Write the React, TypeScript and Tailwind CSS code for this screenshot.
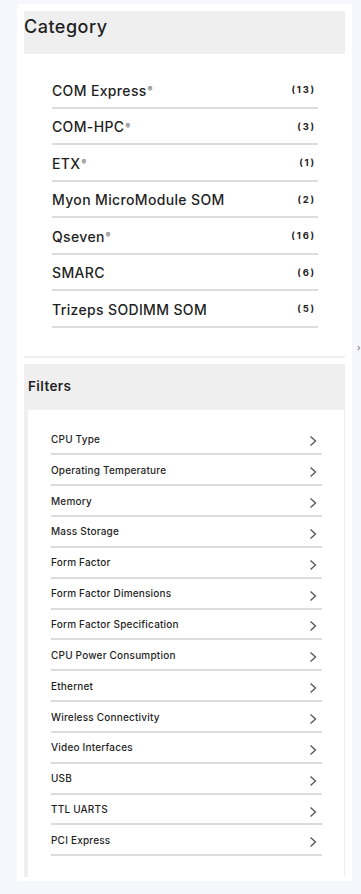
import React from "react";

const cats: [string, boolean, string][] = [
  ["COM Express", true, "13"],
  ["COM-HPC", true, "3"],
  ["ETX", true, "1"],
  ["Myon MicroModule SOM", false, "2"],
  ["Qseven", true, "16"],
  ["SMARC", false, "6"],
  ["Trizeps SODIMM SOM", false, "5"],
];

const filters = [
  "CPU Type",
  "Operating Temperature",
  "Memory",
  "Mass Storage",
  "Form Factor",
  "Form Factor Dimensions",
  "Form Factor Specification",
  "CPU Power Consumption",
  "Ethernet",
  "Wireless Connectivity",
  "Video Interfaces",
  "USB",
  "TTL UARTS",
  "PCI Express",
];

function Chevron() {
  return (
    <svg width="8" height="12" viewBox="0 0 8 12" className="mt-[4px]">
      <path d="M1.5 1.5 L6.5 6 L1.5 10.5" fill="none" stroke="#555" strokeWidth="1.3" />
    </svg>
  );
}

export default function App() {
  return (
    <div
      className="relative min-h-[894px] bg-[#f5f7fc] pt-[4px] pl-[17px] text-[#1f1f1f]"
      style={{ fontFamily: "Inter, 'Noto Sans', sans-serif" }}
    >
      <div className="w-[335px] bg-white px-[7px] pt-[7px] pb-[4px]">
        <div className="h-[43px] bg-[#efefef] flex items-start pt-[2px]">
          <span className="text-[18px] font-medium leading-[28px] tracking-[0.5px]">Category</span>
        </div>
        <div className="pl-[28px] pr-[27px] pt-[18px]">
          {cats.map(([name, reg, n]) => (
            <div
              key={name}
              className="h-[36.5px] pt-[2px] border-b-2 border-[#dcdcdc] flex items-center justify-between"
            >
              <span className="text-[14px] font-medium tracking-[0.35px]">
                {name}
                {reg && <sup className="text-[7px] ml-[1px] text-[#555]">®</sup>}
              </span>
              <span className="text-[9.5px] font-bold tracking-[1.8px] mr-[2px]">({n})</span>
            </div>
          ))}
        </div>
        <div className="h-[28px]" />
        <div className="h-[2px] bg-[#efefef]" />
        <div className="h-[6px]" />
        <div className="bg-[#efefef] pl-[4px] pr-[1px]">
          <div className="h-[46px] flex items-center">
            <span className="text-[13.5px] font-semibold tracking-[0.4px]">Filters</span>
          </div>
          <div className="bg-white pt-[15px] pb-[21px] pl-[23px] pr-[22px]">
            {filters.map((f) => (
              <div
                key={f}
                className="h-[30.85px] pt-[1px] border-b-2 border-[#dcdcdc] flex items-center justify-between"
              >
                <span className="text-[10px] font-medium tracking-[0.2px]">{f}</span>
                <span className="mr-[5px]">
                  <Chevron />
                </span>
              </div>
            ))}
          </div>
        </div>
      </div>
      <span className="absolute left-[357px] top-[343px] text-[9px] text-[#666] leading-none">›</span>
    </div>
  );
}
